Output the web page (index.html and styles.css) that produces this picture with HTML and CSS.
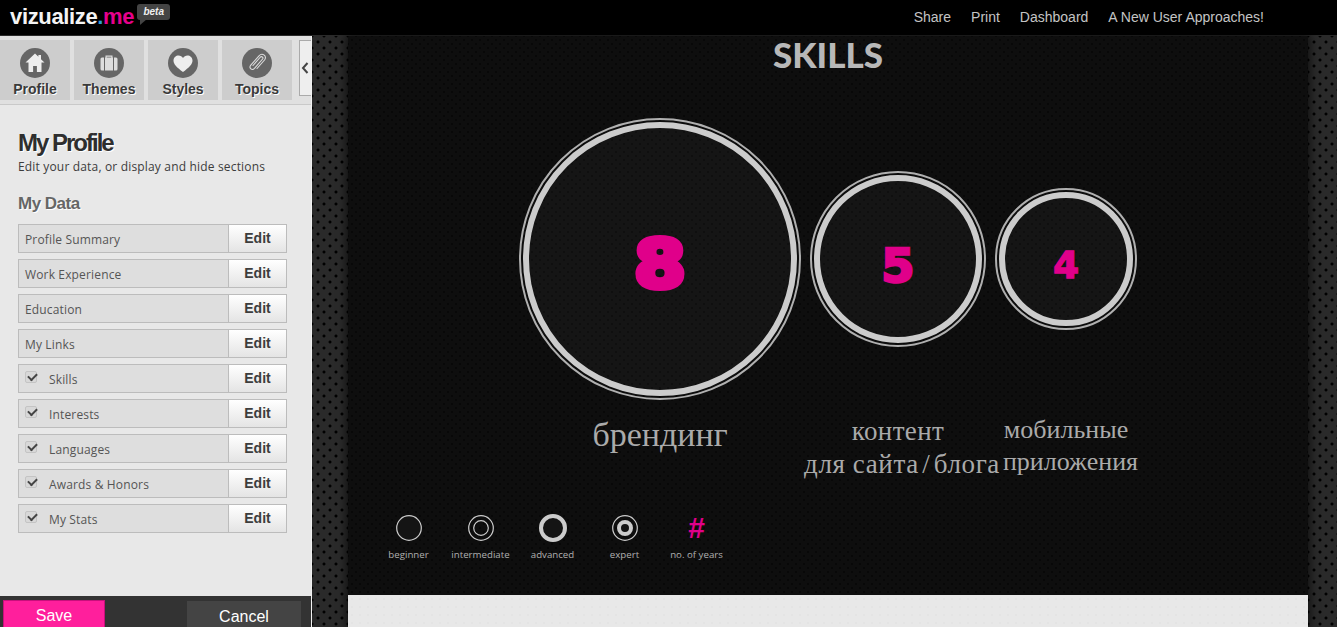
FILE: index.html
```html
<!DOCTYPE html>
<html lang="en">
<head>
<meta charset="utf-8">
<title>vizualize.me</title>
<link rel="stylesheet" href="styles.css">
</head>
<body>
<header class="topbar">
  <div class="brand">
    <span class="logo">vizualize<span class="dot">.</span><span class="me">me</span></span>
    <span class="beta">beta</span>
  </div>
  <nav class="topnav">
    <a>Share</a><a>Print</a><a>Dashboard</a><a>A New User Approaches!</a>
  </nav>
</header>
<div class="app">
  <aside class="sidebar">
    <div class="tabs">
      <div class="tab">
        <span class="tab-icon"><svg viewBox="0 0 30 30"><path d="M15 5.500 5.500 14.500h3V24h4.600v-6h3.800v6h4.600v-9.500h3l-3.500-3.300V7h-2.600v1.800z" fill="#eee"/></svg></span>
        <span class="tab-label">Profile</span>
      </div>
      <div class="tab">
        <span class="tab-icon"><svg viewBox="0 0 30 30"><path d="M11.500 9.500V7.500h7v2h3.500q1.500 0 1.500 1.500v10q0 1.500-1.500 1.500H8q-1.500 0-1.500-1.500V11q0-1.500 1.500-1.500zm1.200 0h4.600V8.700h-4.600zM10 9.500v13h1v-13zm9 0v13h1v-13z" fill="#ddd" fill-rule="evenodd"/></svg></span>
        <span class="tab-label">Themes</span>
      </div>
      <div class="tab">
        <span class="tab-icon"><svg viewBox="0 0 30 30"><path d="M15 24C9 19.500 5.500 16.500 5.500 12.500 5.500 9.500 8 7.500 10.500 7.500c2 0 3.500 1 4.500 2.500 1-1.500 2.500-2.500 4.500-2.500 2.500 0 5 2 5 5 0 4-3.500 7-9.500 11.500z" fill="#eee"/></svg></span>
        <span class="tab-label">Styles</span>
      </div>
      <div class="tab">
        <span class="tab-icon"><svg viewBox="0 0 30 30"><path d="M11 17.500 18 9.500c1.500-1.700 3.800-.4 2.600 1.500L12.500 20.300c-2.500 2.700-6-.3-3.700-3.100L17 7.800c3.500-3.700 8.500.6 5.500 4.200L15 20.500" fill="none" stroke="#ddd" stroke-width="1.100" stroke-linecap="round"/></svg></span>
        <span class="tab-label">Topics</span>
      </div>
      <div class="collapse"><svg viewBox="0 0 10 14"><path d="M7.500 2 3 7l4.500 5" fill="none" stroke="#444" stroke-width="2"/></svg></div>
    </div>
    <div class="panel">
      <h1>My Profile</h1>
      <p class="sub">Edit your data, or display and hide sections</p>
      <h2>My Data</h2>
      <ul class="rows">
        <li class="row"><span class="row-name">Profile Summary</span><button class="edit">Edit</button></li>
        <li class="row"><span class="row-name">Work Experience</span><button class="edit">Edit</button></li>
        <li class="row"><span class="row-name">Education</span><button class="edit">Edit</button></li>
        <li class="row"><span class="row-name">My Links</span><button class="edit">Edit</button></li>
        <li class="row"><span class="check"></span><span class="row-name">Skills</span><button class="edit">Edit</button></li>
        <li class="row"><span class="check"></span><span class="row-name">Interests</span><button class="edit">Edit</button></li>
        <li class="row"><span class="check"></span><span class="row-name">Languages</span><button class="edit">Edit</button></li>
        <li class="row"><span class="check"></span><span class="row-name">Awards &amp; Honors</span><button class="edit">Edit</button></li>
        <li class="row"><span class="check"></span><span class="row-name">My Stats</span><button class="edit">Edit</button></li>
      </ul>
    </div>
    <div class="actions">
      <button class="save">Save</button>
      <button class="cancel">Cancel</button>
    </div>
  </aside>
  <main class="stage">
    <div class="sheet">
      <section class="skills">
        <h3>SKILLS</h3>
        <div class="skill-grid">
          <div class="ring big"><div class="disc"><span class="num">8</span></div></div>
          <div class="ring mid"><div class="disc"><span class="num">5</span></div></div>
          <div class="ring small"><div class="disc"><span class="num">4</span></div></div>
          <div class="label label-big">брендинг</div>
          <div class="label label-mid"><span class="first">контент</span>для сайта<span class="slash">/</span>блога</div>
          <div class="label label-small"><span class="first">мобильные</span>приложения</div>
        </div>
        <div class="legend">
          <div class="key"><svg viewBox="0 0 30 30"><circle cx="15" cy="15" r="12.300" fill="#141414" stroke="#ccc" stroke-width="1.200"/></svg><span>beginner</span></div>
          <div class="key"><svg viewBox="0 0 30 30"><circle cx="15" cy="15" r="12.300" fill="none" stroke="#ccc" stroke-width="1.200"/><circle cx="15" cy="15" r="7.300" fill="none" stroke="#ccc" stroke-width="1.200"/></svg><span>intermediate</span></div>
          <div class="key"><svg viewBox="0 0 30 30"><circle cx="15" cy="15" r="12" fill="#141414" stroke="#ccc" stroke-width="4"/></svg><span>advanced</span></div>
          <div class="key"><svg viewBox="0 0 30 30"><circle cx="15" cy="15" r="12.300" fill="none" stroke="#ccc" stroke-width="1.200"/><circle cx="15" cy="15" r="6" fill="#141414" stroke="#ccc" stroke-width="4"/></svg><span>expert</span></div>
          <div class="key"><b class="hash">#</b><span>no. of years</span></div>
        </div>
      </section>
      <div class="next"></div>
    </div>
  </main>
</div>
</body>
</html>
```
FILE: styles.css
```css
* { box-sizing: border-box; }
html, body { margin: 0; height: 100%; overflow: hidden; }
body { font-family: "Liberation Sans", Arial, sans-serif; background: #000; }

.topbar {
  height: 36px;
  background: #000;
  border-bottom: 1px solid #2a2a2a;
  display: flex;
  align-items: center;
  justify-content: space-between;
  padding: 0 73px 2px 10px;
}
.brand { display: flex; align-items: flex-start; }
.logo { font-size: 22px; font-weight: 700; color: #f4f4f4; letter-spacing: -.35px; line-height: 36px; }
.dot { color: #2a9fd8; }
.me { color: #e6008c; }
.beta {
  position: relative;
  margin: 5px 0 0 3px;
  width: 33px;
  height: 16px;
  background: #444;
  border-radius: 3px;
  color: #eee;
  font-size: 10px;
  font-weight: 700;
  font-style: italic;
  line-height: 15px;
  text-align: center;
}
.beta::after {
  content: "";
  position: absolute;
  left: 3px;
  top: 15px;
  border-top: 6px solid #444;
  border-right: 7px solid transparent;
}
.topnav { display: flex; gap: 20px; }
.topnav a { color: #c4c4c4; font-size: 14px; }

.app { display: flex; height: 591px; }

.sidebar {
  width: 312px;
  flex: none;
  display: flex;
  flex-direction: column;
  background: #e8e8e8;
  border-right: 1px solid #f2f2f2;
}
.tabs {
  height: 69px;
  flex: none;
  background: #e0e0e0;
  border-bottom: 1px solid #c9c9c9;
  display: flex;
  align-items: flex-start;
  gap: 4px;
  padding-top: 4px;
}
.tab {
  width: 70px;
  flex: none;
  height: 60px;
  background: #cdcdcd;
  display: flex;
  flex-direction: column;
  align-items: center;
  padding-top: 8px;
}
.tab-icon {
  width: 30px;
  height: 30px;
  border-radius: 50%;
  background: #666;
  display: block;
}
.tab-icon svg { display: block; width: 30px; height: 30px; }
.tab-label {
  font-size: 14px;
  font-weight: 700;
  line-height: 16px;
  margin-top: 3px;
  color: #3a3a3a;
  text-shadow: 1px 1px 0 #fff;
}
.collapse {
  width: 12px;
  flex: none;
  height: 56px;
  margin-left: 3px;
  border: 1px solid #aaa;
  border-right: 0;
  background: #eee;
  display: flex;
  align-items: center;
}
.collapse svg { width: 10px; height: 14px; }

.panel {
  flex: 1;
  padding: 24px 0 0 18px;
}
h1 {
  margin: 0;
  font-size: 24px;
  line-height: 28px;
  letter-spacing: -2px;
  font-weight: 700;
  color: #2e2e2e;
  text-shadow: 1px 1px 0 #fff;
}
.sub {
  margin: 1px 0 0;
  font-family: "Open Sans", sans-serif;
  font-size: 12px;
  line-height: 18px;
  letter-spacing: .17px;
  color: #3c3c3c;
}
h2 {
  margin: 18px 0 0;
  font-size: 17px;
  line-height: 20px;
  letter-spacing: -.5px;
  font-weight: 700;
  color: #666;
  text-shadow: 1px 1px 0 #fff;
}
.rows {
  list-style: none;
  margin: 10px 0 0;
  padding: 0;
  width: 269px;
  display: flex;
  flex-direction: column;
  gap: 6px;
}
.row {
  height: 29px;
  border: 1px solid #bcbcbc;
  background: #dedede;
  display: flex;
  align-items: center;
  padding-left: 6px;
}
.row-name {
  flex: 1;
  font-family: "Open Sans", sans-serif;
  font-size: 12px;
  letter-spacing: .15px;
  color: #555;
  padding-top: 2px;
}
.check {
  position: relative;
  width: 12px;
  height: 12px;
  margin: -4px 12px 0 0;
  border-radius: 2px;
  background: #d8d8d8;
  border: 1px solid #c4c4c4;
}
.check::after {
  content: "";
  position: absolute;
  left: 2px;
  top: 1px;
  width: 7px;
  height: 4px;
  border-left: 2px solid #444;
  border-bottom: 2px solid #444;
  transform: rotate(-45deg);
}
.edit {
  width: 58px;
  height: 27px;
  padding: 0 0 2px;
  border: 0;
  border-left: 1px solid #bcbcbc;
  background: linear-gradient(#fff, #e4e4e4);
  font-family: "Liberation Sans", sans-serif;
  font-size: 14px;
  font-weight: 700;
  color: #3d3d3d;
}
.actions {
  height: 31px;
  flex: none;
  background: #333;
  display: flex;
  justify-content: space-between;
  padding: 4px 10px 0 3px;
  overflow: hidden;
}
.actions button {
  height: 32px;
  padding: 0 0 1px;
  border: 0;
  color: #fff;
  font-family: "Liberation Sans", sans-serif;
  font-size: 16px;
}
.save { width: 102px; background: #ff1f9c; border-top: 1px solid #c80f7c !important; border-left: 1px solid #c80f7c !important; border-right: 1px solid #c80f7c !important; }
.cancel { width: 114px; background: #444; margin-top: 1px; }

.stage {
  flex: 1;
  padding: 0 29px 0 36px;
  background-color: #2a2a2a;
  background-image:
    radial-gradient(circle, #000 1.200px, transparent 1.800px),
    radial-gradient(circle, #000 1.200px, transparent 1.800px);
  background-size: 12px 12px;
  background-position: 0 0, 6px 6px;
}
.sheet {
  height: 100%;
  display: flex;
  flex-direction: column;
  box-shadow: 0 0 8px 2px rgba(0,0,0,.6);
}
.skills {
  height: 559px;
  flex: none;
  position: relative;
  background-color: #0e0e0e;
  background-image: radial-gradient(circle, #080808 1px, transparent 1.500px), radial-gradient(circle, #080808 1px, transparent 1.500px);
  background-size: 8px 8px;
  background-position: 0 0, 4px 4px;
  color: #ccc;
}
h3 {
  margin: 0;
  text-align: center;
  font-family: "Lato", sans-serif;
  font-size: 35px;
  line-height: 36px;
  font-weight: 900;
  color: #b8b8b8;
}
.skill-grid {
  display: grid;
  grid-template-columns: 282px 176px 142px;
  grid-template-rows: 282px auto;
  column-gap: 9px;
  justify-content: center;
  justify-items: center;
  align-items: center;
  margin-top: 46px;
}
.ring {
  border: 2px solid #b0b0b0;
  border-radius: 50%;
  padding: 2px;
}
.big { width: 282px; height: 282px; }
.mid { width: 176px; height: 176px; }
.small { width: 142px; height: 142px; }
.disc {
  width: 100%;
  height: 100%;
  border: 6px solid #ccc;
  border-radius: 50%;
  background: rgba(255,255,255,.03);
  display: flex;
  align-items: center;
  justify-content: center;
}
.num {
  display: inline-block;
  font-family: "DejaVu Sans", sans-serif;
  font-weight: 700;
  color: #e0008a;
  -webkit-text-stroke: 1.500px #e0008a;
}
.big .num { font-size: 66px; padding-top: 10px; -webkit-text-stroke-width: 6px; transform: scaleX(1.12); }
.mid .num { font-size: 46px; padding-top: 14px; -webkit-text-stroke-width: 2.500px; transform: scaleX(1.04); }
.small .num { font-size: 37px; padding-top: 12px; }
.label {
  align-self: start;
  font-family: "Liberation Serif", serif;
  color: #aaa;
  text-align: center;
  white-space: nowrap;
}
.first { display: block; }
.label-big { font-size: 34px; line-height: 40px; margin-top: 15px; }
.label-mid { font-size: 27px; line-height: 33px; letter-spacing: .6px; margin: 15px 0 0 8px; }
.label-mid .first { margin-right: 8px; letter-spacing: .4px; }
.slash { margin: 0 3.500px; }
.label-small { font-size: 26px; line-height: 32px; margin: 14px 0 0 9px; }
.label-small .first { margin-right: 9px; }
.legend {
  display: grid;
  grid-template-columns: repeat(5, 72px);
  justify-items: center;
  position: absolute;
  left: 24.500px;
  top: 477px;
}
.key { display: flex; flex-direction: column; align-items: center; width: 72px; }
.key svg { width: 30px; height: 30px; display: block; }
.key span { margin-top: 5px; font-family: "Open Sans", sans-serif; font-size: 9.700px; line-height: 14px; color: #b0b0b0; white-space: nowrap; }
.hash { height: 30px; line-height: 30px; font-size: 30px; font-weight: 700; color: #e0008a; }
.next {
  flex: 1;
  background-color: #e8e8e8;
  background-image: radial-gradient(circle, #e4e4e4 1px, transparent 1.500px);
  background-size: 8px 8px;
}
```
